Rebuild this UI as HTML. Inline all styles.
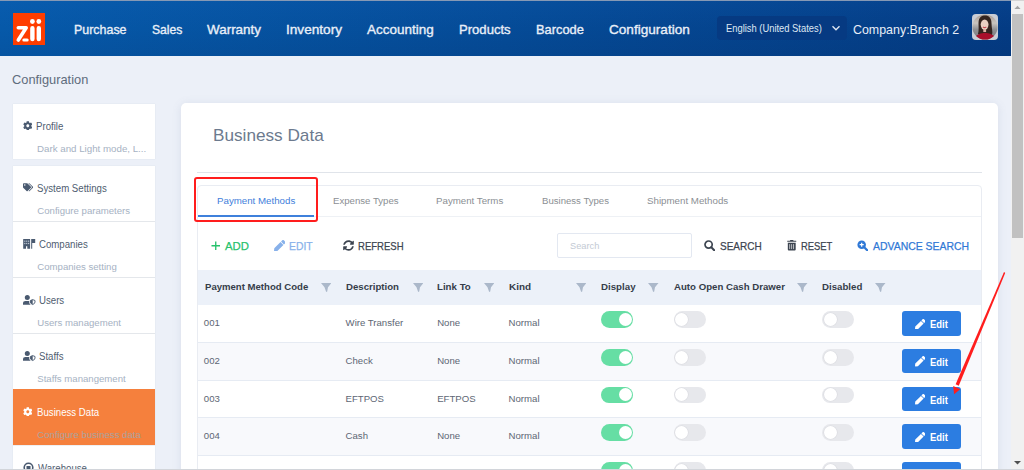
<!DOCTYPE html>
<html><head><meta charset="utf-8"><title>Business Data</title>
<style>
html,body{margin:0;padding:0;}
body{width:1024px;height:470px;overflow:hidden;position:relative;background:#ecf0f8;font-family:"Liberation Sans",sans-serif;}
.t{position:absolute;white-space:nowrap;line-height:1;transform-origin:0 0;}
.a{position:absolute;}
#hdr{position:absolute;left:0;top:0;width:1011px;height:56px;background:linear-gradient(180deg,rgba(30,120,220,0.10) 0%,rgba(30,120,220,0) 50%,rgba(0,10,40,0.06) 100%),linear-gradient(90deg,#0659a9 0%,#054b97 50%,#043b83 100%);}
#hdrline{position:absolute;left:0;top:0;width:1011px;height:1px;background:#8699b5;}
#sbline{position:absolute;left:1011px;top:0;width:13px;height:1px;background:#d5d5d5;}
#logo{position:absolute;left:13px;top:12.5px;width:32px;height:32px;background:#ff3d00;}
#lang{position:absolute;left:717px;top:16px;width:130px;height:24px;border-radius:4px;background:#063a82;}
#avatar{position:absolute;left:972px;top:14px;width:26px;height:26px;border-radius:4px;background:#c9cdd5;overflow:hidden;}
.card{position:absolute;background:#fff;}
#side1{left:13px;top:103.5px;width:142.3px;height:55px;box-shadow:0 0 1px rgba(60,80,110,0.15);}
#side2{left:13px;top:165.5px;width:142.3px;height:320px;box-shadow:0 0 1px rgba(60,80,110,0.15);}
.sep{position:absolute;left:13px;width:142px;height:1px;background:#e4e7eb;}
#active{position:absolute;left:13px;top:389px;width:142.3px;height:56.3px;background:#f5803d;}
#main{left:181px;top:102.5px;width:817px;height:400px;border-radius:5px;box-shadow:0 1px 10px rgba(90,110,150,0.13);}
#hr{position:absolute;left:197px;top:171.5px;width:785px;height:1px;background:#e0e4ea;}
#panel{position:absolute;left:197px;top:185px;width:785px;height:300px;border:1px solid #e9ecf2;border-radius:4px 4px 0 0;box-sizing:border-box;}
#tabline{position:absolute;left:198px;top:216px;width:783px;height:1px;background:#eef1f5;}
#tabul{position:absolute;left:198px;top:214.8px;width:115.5px;height:2px;background:#3f80db;}
#search{position:absolute;left:557px;top:233px;width:135px;height:24.6px;border-radius:2px;border:1px solid #e3e8f1;box-sizing:border-box;background:#fff;}
#thead{position:absolute;left:198px;top:270px;width:783px;height:34.5px;background:#ecf1f9;}
.row{position:absolute;left:198px;width:783px;height:37.6px;}
.rline{position:absolute;left:198px;width:783px;height:1px;background:#e6ebf3;}
.tg{position:absolute;width:32px;height:16.5px;border-radius:9px;}
.tg.on{background:#66dea4;}
.tg.off{background:#e7e8ec;}
.knob{position:absolute;top:1.8px;width:13px;height:13px;border-radius:50%;background:#fff;}
.tg.on .knob{left:17.5px;}
.tg.off .knob{left:1.5px;box-shadow:0 0 0 0.6px #dadbe0;}
.btn{position:absolute;left:902px;width:59px;height:24.6px;border-radius:3px;background:#2c7de1;}
#sb{position:absolute;left:1011px;top:0;width:13px;height:470px;background:#f1f1f1;}
#thumb{position:absolute;left:1012px;top:14px;width:11px;height:224px;background:#c1c1c1;}
#botline{position:absolute;left:0;top:469px;width:1024px;height:1px;background:#d2d5da;}

</style></head><body>
<div id="hdr"></div>
<div id="hdrline"></div>
<div id="logo"><svg width="32" height="32" viewBox="0 0 32 32" style="position:absolute;left:0;top:0">
<path d="M5.3 14.8 H13.2 L5.3 27" stroke="#fff" stroke-width="3.6" fill="none" stroke-linecap="round" stroke-linejoin="round"/>
<path d="M10.8 27.1 H14.2" stroke="#fff" stroke-width="3" stroke-linecap="round"/>
<circle cx="19.4" cy="8.5" r="2.4" fill="#fff"/><circle cx="25.8" cy="8.5" r="2.4" fill="#fff"/>
<path d="M19.4 15.2 V26.1 M25.8 15.2 V26.1" stroke="#fff" stroke-width="4.4" stroke-linecap="round"/>
</svg></div>
<div id="lang"><svg width="10" height="10" viewBox="0 0 10 10" style="position:absolute;left:114px;top:7px"><path d="M1.5 3.2 L5 6.7 L8.5 3.2" stroke="#dfe7f2" stroke-width="1.4" fill="none"/></svg></div>
<div id="avatar"><svg width="26" height="26" viewBox="0 0 26 26">
<defs><clipPath id="cc"><circle cx="13" cy="13" r="12.6"/></clipPath>
<linearGradient id="bgg" x1="0" y1="0" x2="0" y2="1"><stop offset="0" stop-color="#a89a90"/><stop offset="0.35" stop-color="#c9c4bf"/><stop offset="0.6" stop-color="#8f8f92"/><stop offset="1" stop-color="#7a7a7c"/></linearGradient></defs>
<g clip-path="url(#cc)">
<rect width="26" height="26" fill="url(#bgg)"/>
<path d="M6.5 9 C6.5 3 10 1.5 13 1.5 C17 1.5 19.5 4 19.5 9 C19.5 14 21 18 20 21 L16 22 L9 22 L6 20 C7 16 6.5 13 6.5 9Z" fill="#33241f"/>
<ellipse cx="12.6" cy="10.6" rx="3.9" ry="5.2" fill="#ead0c4"/>
<path d="M10.9 12.9 Q12.6 14.4 14.3 12.9" stroke="#c84a55" stroke-width="1.1" fill="none"/>
<rect x="11.3" y="15" width="2.8" height="3" fill="#dcb4a4"/>
<ellipse cx="13" cy="27.5" rx="11.5" ry="8.8" fill="#a90f2b"/>
</g></svg></div>

<div class="card" id="side1"></div>
<div class="card" id="side2"></div>
<div class="sep" style="top:221px"></div>
<div class="sep" style="top:277px"></div>
<div class="sep" style="top:333px"></div>
<div id="active"></div>
<div class="sep" style="top:445px;background:#eef0f3"></div>

<!-- sidebar icons -->
<svg class="a" style="left:22.9px;top:120.6px" width="9.6" height="9.6" viewBox="0 0 512 512"><path fill="#4a5a70" d="M487.4 315.7l-42.6-24.6c4.3-23.2 4.3-47 0-70.2l42.6-24.6c4.9-2.8 7.1-8.6 5.5-14-11.1-35.6-30-67.8-54.7-94.6-3.8-4.1-10-5.1-14.8-2.3L380.8 110c-17.9-15.4-38.5-27.3-60.8-35.1V25.8c0-5.6-3.9-10.5-9.4-11.7-36.7-8.2-74.3-7.8-109.2 0-5.5 1.2-9.4 6.1-9.4 11.7V75c-22.2 7.9-42.8 19.8-60.8 35.1L88.7 85.5c-4.9-2.8-11-1.9-14.8 2.3-24.7 26.7-43.6 58.9-54.7 94.6-1.7 5.4.6 11.2 5.5 14L67.3 221c-4.3 23.2-4.3 47 0 70.2l-42.6 24.6c-4.9 2.8-7.1 8.6-5.5 14 11.1 35.6 30 67.8 54.7 94.6 3.8 4.1 10 5.1 14.8 2.3l42.6-24.6c17.9 15.4 38.5 27.3 60.8 35.1v49.2c0 5.6 3.9 10.5 9.4 11.7 36.7 8.2 74.3 7.8 109.2 0 5.5-1.2 9.4-6.1 9.4-11.7v-49.2c22.2-7.9 42.8-19.8 60.8-35.1l42.6 24.6c4.9 2.8 11 1.9 14.8-2.3 24.7-26.7 43.6-58.9 54.7-94.6 1.5-5.5-.7-11.3-5.6-14.1zM256 336c-44.1 0-80-35.9-80-80s35.9-80 80-80 80 35.9 80 80-35.9 80-80 80z"/></svg>
<svg class="a" style="left:22.8px;top:183.4px" width="10.2" height="8.5" viewBox="0 0 640 512"><path fill="#4a5a70" d="M497.941 225.941L286.059 14.059A48 48 0 0 0 252.118 0H48C21.49 0 0 21.49 0 48v204.118a48 48 0 0 0 14.059 33.941l211.882 211.882c18.744 18.745 49.136 18.746 67.882 0l204.118-204.118c18.745-18.745 18.745-49.137 0-67.882zM112 160c-26.51 0-48-21.49-48-48s21.49-48 48-48 48 21.49 48 48-21.49 48-48 48zm513.941 133.823L421.823 497.941c-18.745 18.745-49.137 18.745-67.882 0l-.36-.36L527.64 323.522c16.999-16.999 26.36-39.6 26.36-63.64s-9.362-46.641-26.36-63.64L331.397 0h48.721a48 48 0 0 1 33.941 14.059l211.882 211.882c18.745 18.745 18.745 49.137 0 67.882z"/></svg>
<svg class="a" style="left:22.8px;top:239px" width="13" height="10" viewBox="0 0 13 10"><path fill="#4a5a70" d="M0.2 0.1H7.1V9.7H4.3V7.3H3V9.7H0.2Z M8.2 0.1H12.2V3.9H9.2V9.7H8.2Z"/><g fill="#b9c3d0"><rect x="1.2" y="1.6" width="1.2" height="1.2"/><rect x="3.1" y="1.6" width="1.2" height="1.2"/><rect x="5" y="1.6" width="1.2" height="1.2"/><rect x="1.2" y="3.9" width="1.2" height="1.2"/><rect x="3.1" y="3.9" width="1.2" height="1.2"/><rect x="5" y="3.9" width="1.2" height="1.2"/></g></svg>
<svg class="a" style="left:22.8px;top:295px" width="13" height="10.5" viewBox="0 0 13 10.5"><g fill="#4a5a70"><circle cx="4.3" cy="2.5" r="2.5"/><path d="M0 9.8 V8.1 Q0 5.9 2.4 5.9 H6.6 Q7.4 5.9 7.8 6.3 V9.8Z"/></g><path d="M9.7 4.1 L12.4 5.1 V7 Q12.4 9.1 9.7 10 Q7 9.1 7 7 V5.1Z" fill="#fff" stroke="#fff" stroke-width="1.6"/><path d="M9.7 4.6 L12 5.5 V7 Q12 8.7 9.7 9.5 Q7.4 8.7 7.4 7 V5.5Z" fill="none" stroke="#4a5a70" stroke-width="0.9"/><path d="M9.7 4.6 L7.4 5.5 V7 Q7.4 8.7 9.7 9.5Z" fill="#4a5a70"/></svg>
<svg class="a" style="left:22.8px;top:351px" width="13" height="10.5" viewBox="0 0 13 10.5"><g fill="#4a5a70"><circle cx="4.3" cy="2.5" r="2.5"/><path d="M0 9.8 V8.1 Q0 5.9 2.4 5.9 H6.6 Q7.4 5.9 7.8 6.3 V9.8Z"/></g><path d="M9.7 4.1 L12.4 5.1 V7 Q12.4 9.1 9.7 10 Q7 9.1 7 7 V5.1Z" fill="#fff" stroke="#fff" stroke-width="1.6"/><path d="M9.7 4.6 L12 5.5 V7 Q12 8.7 9.7 9.5 Q7.4 8.7 7.4 7 V5.5Z" fill="none" stroke="#4a5a70" stroke-width="0.9"/><path d="M9.7 4.6 L7.4 5.5 V7 Q7.4 8.7 9.7 9.5Z" fill="#4a5a70"/></svg>
<svg class="a" style="left:22.9px;top:406.6px" width="9.6" height="9.6" viewBox="0 0 512 512"><path fill="#ffffff" d="M487.4 315.7l-42.6-24.6c4.3-23.2 4.3-47 0-70.2l42.6-24.6c4.9-2.8 7.1-8.6 5.5-14-11.1-35.6-30-67.8-54.7-94.6-3.8-4.1-10-5.1-14.8-2.3L380.8 110c-17.9-15.4-38.5-27.3-60.8-35.1V25.8c0-5.6-3.9-10.5-9.4-11.7-36.7-8.2-74.3-7.8-109.2 0-5.5 1.2-9.4 6.1-9.4 11.700V75c-22.2 7.9-42.8 19.8-60.8 35.1L88.7 85.5c-4.9-2.8-11-1.9-14.8 2.3-24.7 26.7-43.6 58.9-54.7 94.6-1.7 5.4.6 11.2 5.5 14L67.3 221c-4.3 23.2-4.300 47 0 70.2l-42.6 24.6c-4.9 2.8-7.1 8.6-5.5 14 11.1 35.6 30 67.8 54.7 94.6 3.8 4.1 10 5.1 14.8 2.3l42.6-24.6c17.9 15.4 38.5 27.3 60.8 35.1v49.2c0 5.6 3.9 10.5 9.4 11.7 36.7 8.2 74.3 7.8 109.200 0 5.5-1.2 9.4-6.1 9.4-11.7v-49.2c22.2-7.9 42.8-19.8 60.8-35.1l42.6 24.6c4.9 2.8 11 1.9 14.8-2.3 24.7-26.7 43.6-58.9 54.7-94.6 1.5-5.5-.7-11.3-5.6-14.1zM256 336c-44.1 0-80-35.9-80-80s35.9-80 80-80 80 35.9 80 80-35.9 80-80 80z"/></svg>
<svg class="a" style="left:22.8px;top:462px" width="11" height="11" viewBox="0 0 11 11"><circle cx="5.5" cy="5.5" r="4.3" stroke="#4a5a70" stroke-width="1.6" fill="none"/><rect x="3.5" y="4" width="4" height="4" fill="#4a5a70"/></svg>

<div class="card" id="main"></div>
<div id="hr"></div>
<div id="panel"></div>
<div id="tabline"></div>
<div id="tabul"></div>

<!-- toolbar icons -->
<svg class="a" style="left:211px;top:240.5px" width="9.5" height="9.5" viewBox="0 0 10 10"><path d="M5 0.5V9.5M0.5 5H9.5" stroke="#27c26c" stroke-width="1.4"/></svg>
<svg class="a" style="left:273.5px;top:239.5px" width="11.5" height="11.5" viewBox="0 0 512 512"><path fill="#88b1ea" d="M290.74 93.24l128.02 128.02-277.99 277.99-114.14 12.6C11.35 513.54-1.56 500.62.14 485.34l12.7-114.22 277.9-277.88zm207.2-19.06l-60.11-60.11c-18.75-18.75-49.16-18.75-67.91 0l-56.55 56.55 128.02 128.02 56.55-56.55c18.75-18.76 18.75-49.16 0-67.91z"/></svg>
<svg class="a" style="left:342.5px;top:239.8px" width="11" height="11" viewBox="0 0 512 512"><path fill="#3c4450" d="M370.72 133.28C339.458 104.008 298.888 87.962 255.848 88c-77.458.068-144.328 53.178-162.791 126.85-1.344 5.363-6.122 9.15-11.651 9.15H24.103c-7.498 0-13.194-6.807-11.807-14.176C33.933 94.924 134.813 8 256 8c66.448 0 126.791 26.136 171.315 68.685L463.03 40.97C478.149 25.851 504 36.559 504 57.941V192c0 13.255-10.745 24-24 24H345.941c-21.382 0-32.09-25.851-16.971-40.971l41.75-41.749zM32 296h134.059c21.382 0 32.09 25.851 16.971 40.971l-41.75 41.75c31.262 29.273 71.835 45.319 114.876 45.28 77.418-.07 144.315-53.144 162.787-126.849 1.344-5.363 6.122-9.15 11.651-9.15h57.304c7.498 0 13.194 6.807 11.807 14.176C478.067 417.076 377.187 504 256 504c-66.448 0-126.791-26.136-171.315-68.685L48.97 471.03C33.851 486.149 8 475.441 8 454.059V320c0-13.255 10.745-24 24-24z"/></svg>
<div id="search"></div>
<svg class="a" style="left:704.2px;top:239.5px" width="11" height="11" viewBox="0 0 11 11"><circle cx="4.6" cy="4.6" r="3.6" stroke="#3c4450" stroke-width="1.7" fill="none"/><path d="M7.3 7.3 L10.2 10.2" stroke="#3c4450" stroke-width="2" stroke-linecap="round"/></svg>
<svg class="a" style="left:787px;top:240.3px" width="9.5" height="10.5" viewBox="0 0 448 512"><path fill="#3c4450" d="M32 464a48 48 0 0 0 48 48h288a48 48 0 0 0 48-48V128H32zm272-256a16 16 0 0 1 32 0v224a16 16 0 0 1-32 0zm-96 0a16 16 0 0 1 32 0v224a16 16 0 0 1-32 0zm-96 0a16 16 0 0 1 32 0v224a16 16 0 0 1-32 0zM432 32H312l-9.4-18.7A24 24 0 0 0 281.1 0H166.8a23.72 23.72 0 0 0-21.4 13.3L136 32H16A16 16 0 0 0 0 48v16a16 16 0 0 0 16 16h416a16 16 0 0 0 16-16V48a16 16 0 0 0-16-16z"/></svg>
<svg class="a" style="left:857px;top:239.5px" width="11.2" height="11.2" viewBox="0 0 11 11"><circle cx="4.6" cy="4.6" r="4.2" fill="#2f78d6"/><path d="M7.3 7.3 L10.2 10.2" stroke="#2f78d6" stroke-width="2.2" stroke-linecap="round"/><path d="M4.6 2.6V6.6M2.6 4.6H6.6" stroke="#fff" stroke-width="1.2"/></svg>

<div id="thead"></div>
<!-- filter icons -->
<svg class="a" style="left:320.9px;top:283px" width="10.5" height="9" viewBox="0 0 10.5 9"><path d="M0 0H10.5L7 4.3L6.2 8.6Q5.6 9.2 5 8.6L3.5 4.3Z" fill="#abb8ca"/></svg>
<svg class="a" style="left:412.5px;top:283px" width="10.5" height="9" viewBox="0 0 10.5 9"><path d="M0 0H10.5L7 4.3L6.2 8.6Q5.6 9.2 5 8.6L3.5 4.3Z" fill="#abb8ca"/></svg>
<svg class="a" style="left:483.9px;top:283px" width="10.5" height="9" viewBox="0 0 10.5 9"><path d="M0 0H10.5L7 4.3L6.2 8.6Q5.6 9.2 5 8.6L3.5 4.3Z" fill="#abb8ca"/></svg>
<svg class="a" style="left:575.5px;top:283px" width="10.5" height="9" viewBox="0 0 10.5 9"><path d="M0 0H10.5L7 4.3L6.2 8.6Q5.6 9.2 5 8.6L3.5 4.3Z" fill="#abb8ca"/></svg>
<svg class="a" style="left:648.3px;top:283px" width="10.5" height="9" viewBox="0 0 10.5 9"><path d="M0 0H10.5L7 4.3L6.2 8.6Q5.6 9.2 5 8.6L3.5 4.3Z" fill="#abb8ca"/></svg>
<svg class="a" style="left:797.3px;top:283px" width="10.5" height="9" viewBox="0 0 10.5 9"><path d="M0 0H10.5L7 4.3L6.2 8.6Q5.6 9.2 5 8.6L3.5 4.3Z" fill="#abb8ca"/></svg>
<svg class="a" style="left:875.4px;top:283px" width="10.5" height="9" viewBox="0 0 10.5 9"><path d="M0 0H10.5L7 4.3L6.2 8.6Q5.6 9.2 5 8.6L3.5 4.3Z" fill="#abb8ca"/></svg>

<!-- rows -->
<div class="row" style="top:304.5px;height:37.5px;background:#fff"></div>
<div class="row" style="top:343px;height:37px;background:#f8f9fc"></div>
<div class="row" style="top:381px;height:36px;background:#fff"></div>
<div class="row" style="top:418px;height:37px;background:#f8f9fc"></div>
<div class="row" style="top:456px;height:20px;background:#fff"></div>
<div class="rline" style="top:342px"></div>
<div class="rline" style="top:380px"></div>
<div class="rline" style="top:417px"></div>
<div class="rline" style="top:455px"></div>

<div class="tg on" style="left:601px;top:311.2px"><div class="knob"></div></div>
<div class="tg off" style="left:673.7px;top:311.2px"><div class="knob"></div></div>
<div class="tg off" style="left:822.3px;top:311.2px"><div class="knob"></div></div>
<div class="tg on" style="left:601px;top:349px"><div class="knob"></div></div>
<div class="tg off" style="left:673.7px;top:349px"><div class="knob"></div></div>
<div class="tg off" style="left:822.3px;top:349px"><div class="knob"></div></div>
<div class="tg on" style="left:601px;top:386.6px"><div class="knob"></div></div>
<div class="tg off" style="left:673.7px;top:386.6px"><div class="knob"></div></div>
<div class="tg off" style="left:822.3px;top:386.6px"><div class="knob"></div></div>
<div class="tg on" style="left:601px;top:424.3px"><div class="knob"></div></div>
<div class="tg off" style="left:673.7px;top:424.3px"><div class="knob"></div></div>
<div class="tg off" style="left:822.3px;top:424.3px"><div class="knob"></div></div>
<div class="tg on" style="left:601px;top:462px"><div class="knob"></div></div>
<div class="tg off" style="left:673.7px;top:462px"><div class="knob"></div></div>
<div class="tg off" style="left:822.3px;top:462px"><div class="knob"></div></div>

<div class="btn" style="top:311px"></div>
<div class="btn" style="top:348.8px"></div>
<div class="btn" style="top:386.6px"></div>
<div class="btn" style="top:424.2px"></div>
<div class="btn" style="top:462px"></div>
<svg class="a" style="left:914.5px;top:318.5px" width="10.5" height="10.5" viewBox="0 0 512 512"><path fill="#fff" d="M290.74 93.24l128.02 128.02-277.99 277.99-114.14 12.6C11.35 513.54-1.56 500.62.14 485.34l12.7-114.22 277.9-277.88zm207.2-19.06l-60.11-60.11c-18.75-18.75-49.16-18.75-67.91 0l-56.55 56.55 128.020 128.02 56.55-56.55c18.75-18.76 18.75-49.16 0-67.91z"/></svg>
<svg class="a" style="left:914.5px;top:356.4px" width="10.5" height="10.5" viewBox="0 0 512 512"><path fill="#fff" d="M290.74 93.24l128.02 128.02-277.99 277.99-114.14 12.6C11.35 513.54-1.56 500.62.14 485.34l12.7-114.22 277.9-277.88zm207.2-19.06l-60.11-60.11c-18.75-18.75-49.16-18.75-67.91 0l-56.55 56.55 128.020 128.02 56.55-56.55c18.75-18.76 18.75-49.16 0-67.91z"/></svg>
<svg class="a" style="left:914.5px;top:394.2px" width="10.5" height="10.5" viewBox="0 0 512 512"><path fill="#fff" d="M290.74 93.24l128.02 128.02-277.99 277.99-114.14 12.6C11.35 513.54-1.56 500.62.14 485.34l12.7-114.22 277.9-277.88zm207.2-19.06l-60.11-60.11c-18.75-18.75-49.16-18.75-67.91 0l-56.55 56.55 128.020 128.02 56.55-56.55c18.75-18.76 18.75-49.16 0-67.91z"/></svg>
<svg class="a" style="left:914.5px;top:431.9px" width="10.5" height="10.5" viewBox="0 0 512 512"><path fill="#fff" d="M290.74 93.24l128.02 128.02-277.99 277.99-114.14 12.6C11.35 513.54-1.56 500.62.14 485.34l12.7-114.22 277.9-277.88zm207.2-19.06l-60.11-60.11c-18.75-18.75-49.16-18.75-67.91 0l-56.55 56.55 128.020 128.02 56.55-56.55c18.75-18.76 18.75-49.16 0-67.91z"/></svg>

<div class=t style="left:74.4px;top:23.0px;font-size:13.2px;font-weight:400;color:#e9eff8;transform:scaleX(0.943);-webkit-text-stroke:0.35px #e9eff8;">Purchase</div>
<div class=t style="left:151.7px;top:23.0px;font-size:13.2px;font-weight:400;color:#e9eff8;transform:scaleX(0.922);-webkit-text-stroke:0.35px #e9eff8;">Sales</div>
<div class=t style="left:206.7px;top:23.0px;font-size:13.2px;font-weight:400;color:#e9eff8;transform:scaleX(1.019);-webkit-text-stroke:0.35px #e9eff8;">Warranty</div>
<div class=t style="left:285.9px;top:23.0px;font-size:13.2px;font-weight:400;color:#e9eff8;transform:scaleX(1.033);-webkit-text-stroke:0.35px #e9eff8;">Inventory</div>
<div class=t style="left:367.0px;top:23.0px;font-size:13.2px;font-weight:400;color:#e9eff8;transform:scaleX(1.021);-webkit-text-stroke:0.35px #e9eff8;">Accounting</div>
<div class=t style="left:459.2px;top:23.0px;font-size:13.2px;font-weight:400;color:#e9eff8;transform:scaleX(0.992);-webkit-text-stroke:0.35px #e9eff8;">Products</div>
<div class=t style="left:535.9px;top:23.0px;font-size:13.2px;font-weight:400;color:#e9eff8;transform:scaleX(0.975);-webkit-text-stroke:0.35px #e9eff8;">Barcode</div>
<div class=t style="left:608.8px;top:23.0px;font-size:13.2px;font-weight:400;color:#e9eff8;transform:scaleX(1.030);-webkit-text-stroke:0.35px #e9eff8;">Configuration</div>
<div class=t style="left:725.7px;top:24.0px;font-size:10.2px;font-weight:400;color:#dfe7f2;transform:scaleX(0.919);">English (United States)</div>
<div class=t style="left:853.2px;top:23.0px;font-size:13px;font-weight:400;color:#e8eef7;transform:scaleX(0.955);">Company:Branch 2</div>
<div class=t style="left:12.3px;top:74.0px;font-size:12.8px;font-weight:400;color:#5f6c7d;transform:scaleX(1.002);">Configuration</div>
<div class=t style="left:36.3px;top:122.0px;font-size:10.0px;font-weight:400;color:#505d70;transform:scaleX(0.965);">Profile</div>
<div class=t style="left:37.3px;top:144.0px;font-size:9.6px;font-weight:400;color:#a6b2c3;transform:scaleX(1.014);">Dark and Light mode, L...</div>
<div class=t style="left:36.7px;top:184.0px;font-size:10.0px;font-weight:400;color:#505d70;transform:scaleX(0.965);">System Settings</div>
<div class=t style="left:37.3px;top:206.0px;font-size:9.6px;font-weight:400;color:#a6b2c3;">Configure parameters</div>
<div class=t style="left:39.3px;top:240.0px;font-size:10.0px;font-weight:400;color:#505d70;transform:scaleX(0.965);">Companies</div>
<div class=t style="left:37.3px;top:262.0px;font-size:9.6px;font-weight:400;color:#a6b2c3;">Companies setting</div>
<div class=t style="left:39.3px;top:296.0px;font-size:10.0px;font-weight:400;color:#505d70;transform:scaleX(0.965);">Users</div>
<div class=t style="left:37.3px;top:318.0px;font-size:9.6px;font-weight:400;color:#a6b2c3;">Users management</div>
<div class=t style="left:39.3px;top:352.0px;font-size:10.0px;font-weight:400;color:#505d70;transform:scaleX(0.965);">Staffs</div>
<div class=t style="left:37.3px;top:374.0px;font-size:9.6px;font-weight:400;color:#a6b2c3;">Staffs manangement</div>
<div class=t style="left:36.5px;top:408.0px;font-size:10.0px;font-weight:400;color:#ffffff;transform:scaleX(0.965);">Business Data</div>
<div class=t style="left:37.3px;top:430.0px;font-size:9.6px;font-weight:400;color:#aba29d;">Configure business data</div>
<div class=t style="left:37.9px;top:464.0px;font-size:10.0px;font-weight:400;color:#505d70;transform:scaleX(0.965);">Warehouse</div>
<div class=t style="left:212.8px;top:127.0px;font-size:17px;font-weight:400;color:#6c7a8e;transform:scaleX(1.010);">Business Data</div>
<div class=t style="left:216.5px;top:196.0px;font-size:9.6px;font-weight:400;color:#3f80db;transform:scaleX(1.012);">Payment Methods</div>
<div class=t style="left:332.7px;top:196.0px;font-size:9.6px;font-weight:400;color:#8b8f94;transform:scaleX(1.002);">Expense Types</div>
<div class=t style="left:436.4px;top:196.0px;font-size:9.6px;font-weight:400;color:#8b8f94;transform:scaleX(1.012);">Payment Terms</div>
<div class=t style="left:542.0px;top:196.0px;font-size:9.6px;font-weight:400;color:#8b8f94;transform:scaleX(0.999);">Business Types</div>
<div class=t style="left:647.4px;top:196.0px;font-size:9.6px;font-weight:400;color:#8b8f94;transform:scaleX(1.015);">Shipment Methods</div>
<div class=t style="left:224.9px;top:240.0px;font-size:11.6px;font-weight:400;color:#27c26c;transform:scaleX(0.979);-webkit-text-stroke:0.25px #27c26c;">ADD</div>
<div class=t style="left:289.3px;top:240.0px;font-size:11.6px;font-weight:400;color:#88b1ea;transform:scaleX(0.895);-webkit-text-stroke:0.25px #88b1ea;">EDIT</div>
<div class=t style="left:358.1px;top:240.0px;font-size:11.6px;font-weight:400;color:#3c4450;transform:scaleX(0.822);-webkit-text-stroke:0.25px #3c4450;">REFRESH</div>
<div class=t style="left:569.9px;top:241.0px;font-size:9.8px;font-weight:400;color:#c3cad4;transform:scaleX(0.943);">Search</div>
<div class=t style="left:720.0px;top:240.0px;font-size:11.6px;font-weight:400;color:#3c4450;transform:scaleX(0.862);-webkit-text-stroke:0.25px #3c4450;">SEARCH</div>
<div class=t style="left:800.8px;top:240.0px;font-size:11.6px;font-weight:400;color:#3c4450;transform:scaleX(0.811);-webkit-text-stroke:0.25px #3c4450;">RESET</div>
<div class=t style="left:872.7px;top:240.0px;font-size:11.6px;font-weight:400;color:#2f78d6;transform:scaleX(0.900);-webkit-text-stroke:0.25px #2f78d6;">ADVANCE SEARCH</div>
<div class=t style="left:204.5px;top:282.0px;font-size:9.6px;font-weight:700;color:#353d49;transform:scaleX(0.998);">Payment Method Code</div>
<div class=t style="left:346.2px;top:282.0px;font-size:9.6px;font-weight:700;color:#353d49;transform:scaleX(1.003);">Description</div>
<div class=t style="left:437.3px;top:282.0px;font-size:9.6px;font-weight:700;color:#353d49;transform:scaleX(1.011);">Link To</div>
<div class=t style="left:508.9px;top:282.0px;font-size:9.6px;font-weight:700;color:#353d49;transform:scaleX(1.034);">Kind</div>
<div class=t style="left:601.0px;top:282.0px;font-size:9.6px;font-weight:700;color:#353d49;transform:scaleX(1.012);">Display</div>
<div class=t style="left:673.7px;top:282.0px;font-size:9.6px;font-weight:700;color:#353d49;transform:scaleX(1.005);">Auto Open Cash Drawer</div>
<div class=t style="left:822.3px;top:282.0px;font-size:9.6px;font-weight:700;color:#353d49;transform:scaleX(1.009);">Disabled</div>
<div class=t style="left:203.8px;top:318.0px;font-size:9.6px;font-weight:400;color:#5d6674;">001</div>
<div class=t style="left:345.6px;top:318.0px;font-size:9.6px;font-weight:400;color:#5d6674;">Wire Transfer</div>
<div class=t style="left:437.2px;top:318.0px;font-size:9.6px;font-weight:400;color:#5d6674;">None</div>
<div class=t style="left:508.6px;top:318.0px;font-size:9.6px;font-weight:400;color:#5d6674;">Normal</div>
<div class=t style="left:929.8px;top:320.0px;font-size:10px;font-weight:700;color:#ffffff;transform:scaleX(0.942);">Edit</div>
<div class=t style="left:203.8px;top:356.0px;font-size:9.6px;font-weight:400;color:#5d6674;">002</div>
<div class=t style="left:345.6px;top:356.0px;font-size:9.6px;font-weight:400;color:#5d6674;">Check</div>
<div class=t style="left:437.2px;top:356.0px;font-size:9.6px;font-weight:400;color:#5d6674;">None</div>
<div class=t style="left:508.6px;top:356.0px;font-size:9.6px;font-weight:400;color:#5d6674;">Normal</div>
<div class=t style="left:929.8px;top:358.0px;font-size:10px;font-weight:700;color:#ffffff;transform:scaleX(0.942);">Edit</div>
<div class=t style="left:203.8px;top:394.0px;font-size:9.6px;font-weight:400;color:#5d6674;">003</div>
<div class=t style="left:345.6px;top:394.0px;font-size:9.6px;font-weight:400;color:#5d6674;">EFTPOS</div>
<div class=t style="left:437.2px;top:394.0px;font-size:9.6px;font-weight:400;color:#5d6674;">EFTPOS</div>
<div class=t style="left:508.6px;top:394.0px;font-size:9.6px;font-weight:400;color:#5d6674;">Normal</div>
<div class=t style="left:929.8px;top:396.0px;font-size:10px;font-weight:700;color:#ffffff;transform:scaleX(0.942);">Edit</div>
<div class=t style="left:203.8px;top:431.0px;font-size:9.6px;font-weight:400;color:#5d6674;">004</div>
<div class=t style="left:345.6px;top:431.0px;font-size:9.6px;font-weight:400;color:#5d6674;">Cash</div>
<div class=t style="left:437.2px;top:431.0px;font-size:9.6px;font-weight:400;color:#5d6674;">None</div>
<div class=t style="left:508.6px;top:431.0px;font-size:9.6px;font-weight:400;color:#5d6674;">Normal</div>
<div class=t style="left:929.8px;top:433.0px;font-size:10px;font-weight:700;color:#ffffff;transform:scaleX(0.942);">Edit</div>
<!-- red annotation box -->
<div class="a" style="left:194.2px;top:177px;width:123.6px;height:44.6px;border:2.2px solid #ff1d1d;border-radius:3px;box-sizing:border-box;"></div>
<!-- red arrow -->
<svg class="a" style="left:940px;top:260px" width="80" height="150" viewBox="0 0 80 150">
<path d="M65.09 13.29 L18.77 125.66 L15.63 124.34 L63.71 12.71 Z" fill="#ff1d1d"/>
<circle cx="64.4" cy="13" r="0.75" fill="#ff1d1d"/>
<path d="M13.2 126.1 L20.2 129.3 L14.1 134.3 Z" fill="#ff1d1d"/>
</svg>
<div id="sb"></div>
<div id="thumb"></div>
<div id="sbline"></div>
<svg class="a" style="left:1011px;top:0" width="13" height="14" viewBox="0 0 13 14"><path d="M3.4 9 H9.6 L6.5 5.8Z" fill="#a3a3a3"/></svg>
<svg class="a" style="left:1011px;top:456px" width="13" height="14" viewBox="0 0 13 14"><path d="M3 5 H10 L6.5 8.5Z" fill="#505050"/></svg>
<div id="botline"></div>

</body></html>
